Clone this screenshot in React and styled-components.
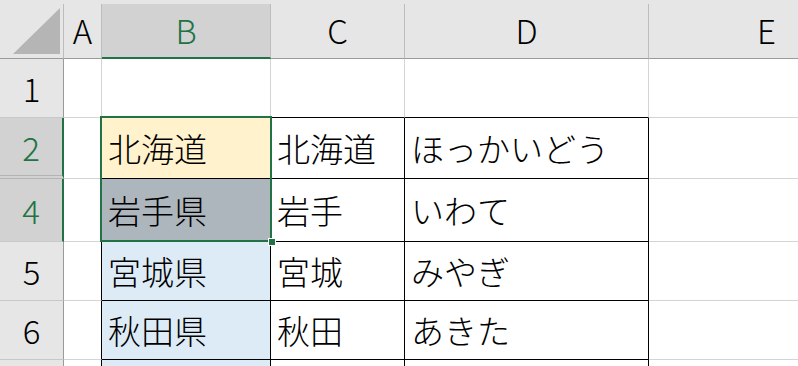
import React from 'react'
import styled, { createGlobalStyle } from 'styled-components'

const GlobalStyle = createGlobalStyle`
  html, body {
    margin: 0;
    padding: 0;
    background: #ffffff;
  }
  body {
    font-family: "Noto Sans CJK JP", "Noto Sans", sans-serif;
  }
`

const columns = ['A', 'B', 'C', 'D', 'E']
const selectedCol = 'B'

const rows = [
  { num: '1', cells: ['', '', '', '', ''] },
  { num: '2', selected: true, hiddenAfter: true, cells: ['', '北海道', '北海道', 'ほっかいどう', ''] },
  { num: '4', selected: true, cells: ['', '岩手県', '岩手', 'いわて', ''] },
  { num: '5', cells: ['', '宮城県', '宮城', 'みやぎ', ''] },
  { num: '6', cells: ['', '秋田県', '秋田', 'あきた', ''] },
  { num: '', cells: ['', '', '', '', ''] }
]

const fills = {
  '2B': '#fff2cc',
  '4B': '#adb5bd',
  '5B': '#ddebf7',
  '6B': '#ddebf7',
  'xB': '#ddebf7'
}

const App = () => {
  return (
    <>
      <GlobalStyle />
      <Window>
        <Sheet>
          <Corner>
            <svg width="63" height="54" viewBox="0 0 63 54">
              <polygon points="13,50 60,50 60,4" fill="#b5b5b5" />
            </svg>
          </Corner>
          {columns.map((c, ci) => (
            <ColHeader key={c} $col={ci + 2} $active={c === selectedCol}>{c}</ColHeader>
          ))}

          {rows.map((r, ri) => (
            <React.Fragment key={ri}>
              <RowHeader $row={ri + 2} $active={r.selected} $hiddenAfter={r.hiddenAfter}>{r.num}</RowHeader>
              {r.cells.map((text, ci) => {
                const col = columns[ci]
                const inTable = ri >= 1 && ci >= 1 && ci <= 3
                const aboveTable = ri === 0 && ci >= 1 && ci <= 3
                const leftOfTable = ri >= 1 && ci === 0
                return (
                  <Cell
                    key={ci}
                    $row={ri + 2}
                    $col={ci + 2}
                    $fill={fills[(r.num || 'x') + col]}
                    $rightDark={inTable || leftOfTable}
                    $bottomDark={inTable || aboveTable}
                  >
                    {text}
                  </Cell>
                )
              })}
            </React.Fragment>
          ))}

          <Selection>
            <FillHandle />
          </Selection>
        </Sheet>
      </Window>
    </>
  )
}

export default App

const Window = styled.div`
  width: 798px;
  height: 366px;
  overflow: hidden;
  background: #e6e6e6;
  padding-top: 4px;
  box-sizing: border-box;
`
const Sheet = styled.div`
  display: grid;
  grid-template-columns: 64px 38px 169px 134px 244px 236px;
  grid-template-rows: 55px 59px 61px 63px 59px 59px 59px;
  width: 885px;
  background: #ffffff;
`
const Corner = styled.div`
  grid-column: 1;
  grid-row: 1;
  background: #e6e6e6;
  border-right: 1px solid #bcbcbc;
  border-bottom: 1px solid #9b9b9b;
  svg {
    display: block;
  }
`
const ColHeader = styled.div`
  grid-column: ${p => p.$col};
  grid-row: 1;
  display: flex;
  align-items: center;
  justify-content: center;
  background: ${p => (p.$active ? '#d2d2d2' : '#e6e6e6')};
  color: ${p => (p.$active ? '#217346' : '#000000')};
  border-right: 1px solid #bcbcbc;
  border-bottom: ${p => (p.$active ? '2px solid #217346' : '1px solid #9b9b9b')};
  font-size: 33px;
  font-weight: 300;
  padding-bottom: 2px;
  box-sizing: border-box;
`
const RowHeader = styled.div`
  grid-column: 1;
  grid-row: ${p => p.$row};
  display: flex;
  align-items: center;
  justify-content: center;
  background: ${p => (p.$active ? '#d2d2d2' : '#e6e6e6')};
  color: ${p => (p.$active ? '#217346' : '#000000')};
  border-right: ${p => (p.$active ? '2px solid #217346' : '1px solid #9b9b9b')};
  border-bottom: ${p => (p.$hiddenAfter ? '4px double #b4b4b4' : '1px solid #c8c8c8')};
  font-size: 33px;
  font-weight: 300;
  box-sizing: border-box;
`
const Cell = styled.div`
  grid-column: ${p => p.$col};
  grid-row: ${p => p.$row};
  display: flex;
  align-items: center;
  padding-left: 6px;
  padding-bottom: 1px;
  background: ${p => p.$fill || '#ffffff'};
  border-right: 1px solid ${p => (p.$rightDark ? '#000000' : '#d4d4d4')};
  border-bottom: 1px solid ${p => (p.$bottomDark ? '#000000' : '#d4d4d4')};
  font-size: 33px;
  font-weight: 300;
  color: #000000;
  white-space: nowrap;
  overflow: hidden;
  box-sizing: border-box;
`
const Selection = styled.div`
  grid-column: 3;
  grid-row: 3 / 5;
  margin: -2px -1px 0 -2px;
  border: 2px solid #217346;
  position: relative;
  pointer-events: none;
`
const FillHandle = styled.div`
  position: absolute;
  right: -5px;
  bottom: -5px;
  width: 6px;
  height: 6px;
  background: #217346;
  outline: 1px solid #ffffff;
`
